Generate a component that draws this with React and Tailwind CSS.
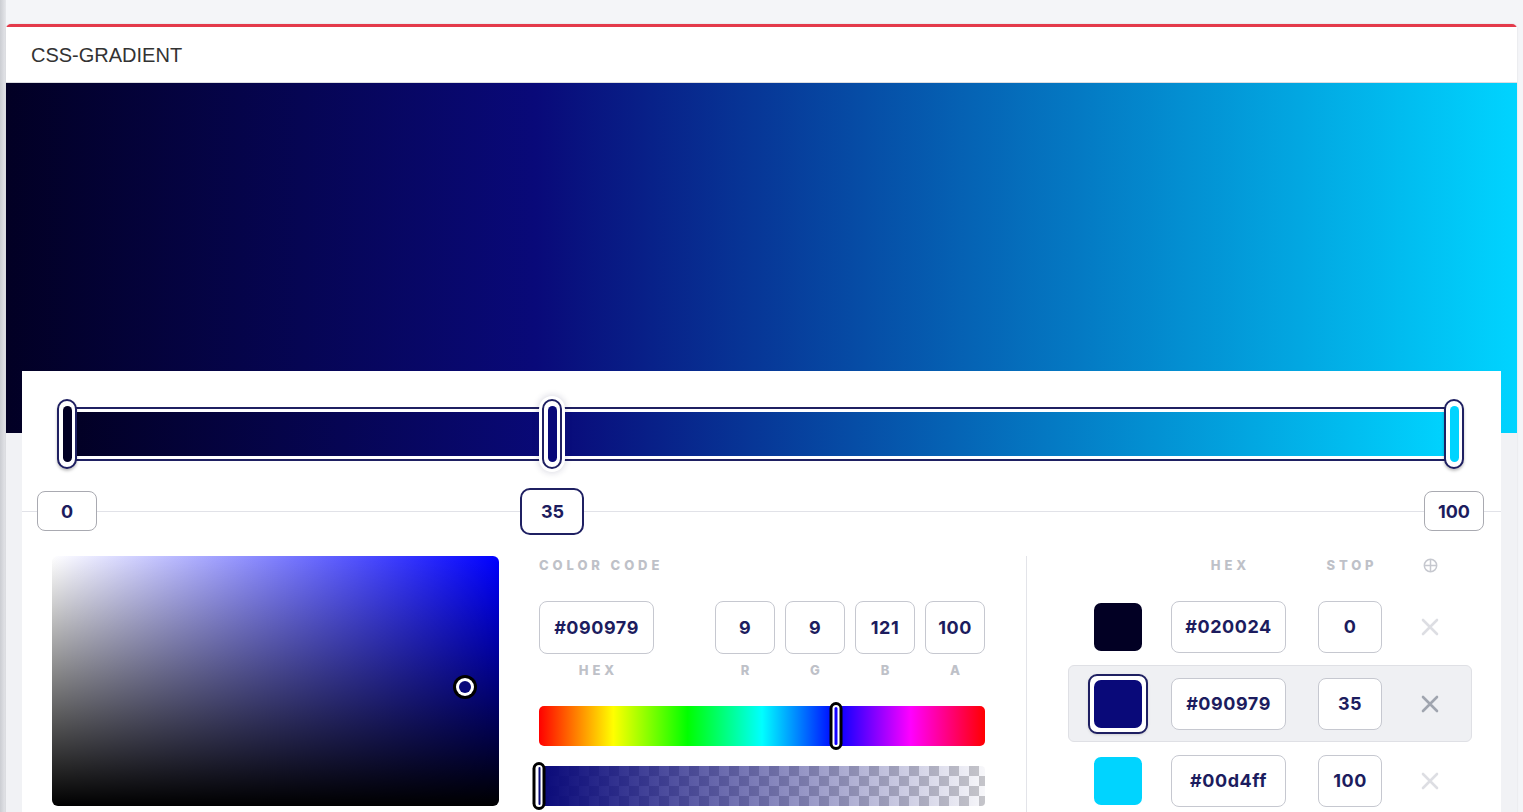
import React from "react";

const NAVY_TEXT = "text-[#1c1c5e]";

function Field({ w, h, children, className = "" }) {
  return (
    <div
      className={`flex items-center justify-center rounded-[8px] border border-[#c6c8d0] bg-white font-bold text-[18px] tracking-[0.03em] ${NAVY_TEXT} ${w} ${h} ${className}`}
    >
      {children}
    </div>
  );
}

function Label({ children, className = "" }) {
  return (
    <div className={`text-[13px] leading-4 font-extrabold tracking-[0.3em] text-[#bec1c8] ${className}`}>
      {children}
    </div>
  );
}

const stops = [
  { p: 0, color: "#020024", hex: "#020024" },
  { p: 35, color: "#090979", hex: "#090979", selected: true },
  { p: 100, color: "#00d4ff", hex: "#00d4ff" },
];

function XIcon({ className }) {
  return (
    <svg width="20" height="20" viewBox="0 0 20 20" className={className}>
      <path d="M3 3 L17 17 M17 3 L3 17" stroke="currentColor" strokeWidth="2.6" strokeLinecap="round" fill="none" />
    </svg>
  );
}

function CirclePlus() {
  return (
    <svg width="15" height="15" viewBox="0 0 16 16" className="text-[#c6c8cf]">
      <circle cx="8" cy="8" r="6.6" stroke="currentColor" strokeWidth="1.6" fill="none" />
      <path d="M8 1.4 V14.6 M1.4 8 H14.6" stroke="currentColor" strokeWidth="1.6" fill="none" />
    </svg>
  );
}

function StopRow({ s }) {
  const inner = (
    <>
      <div className="flex h-[60px] w-[60px] items-center justify-center">
        {s.selected ? (
          <div className="flex h-[60px] w-[60px] items-center justify-center rounded-[9px] border-2 border-[#1f2062] bg-white shadow-sm">
            <div className="h-[48px] w-[48px] rounded-[7px]" style={{ background: s.color }} />
          </div>
        ) : (
          <div className="h-[48px] w-[48px] rounded-[7px]" style={{ background: s.color }} />
        )}
      </div>
      <Field w="w-[115px]" h="h-[52px]" className="ml-[23px]">
        {s.hex}
      </Field>
      <Field w="w-[64px]" h="h-[52px]" className="ml-[32px]">
        {s.p}
      </Field>
      <div className="ml-[32px] flex w-[32px] justify-center">
        <XIcon className={s.selected ? "text-[#a0a5af]" : "text-[#dddee3]"} />
      </div>
    </>
  );
  if (s.selected) {
    return (
      <div className="flex h-[77px] items-center rounded-[6px] border border-[#dfe0e5] bg-[#eff0f3] pl-[19px]">
        {inner}
      </div>
    );
  }
  return <div className="flex h-[77px] items-center pl-[20px]">{inner}</div>;
}

export default function App() {
  return (
    <div className="flex h-[812px] w-full overflow-hidden bg-[#f4f5f8] font-['Inter',sans-serif]">
      <div className="h-full w-[6px] shrink-0 bg-linear-to-r from-[#cbcdd2] to-[#e6e7eb]" />
      <div className="flex-1 pt-[24px] pr-[6px]">
        <div className="rounded-t-[5px] border-t-[3px] border-[#e43a4b] bg-[#f1f2f5] shadow-[0_0_2px_rgba(0,0,0,0.12)]">
          {/* header */}
          <div className="flex h-[56px] items-center border-b border-[#dcdde1] bg-white pl-[25px] font-['Liberation_Sans',Arial,sans-serif] text-[20px] text-[#333]">
            CSS-GRADIENT
          </div>
          {/* preview */}
          <div className="h-[350px] [background-image:linear-gradient(90deg,#020024_0%,#090979_35%,#00d4ff_100%)]" />
          {/* panel */}
          <div className="relative mx-[16px] -mt-[62px] bg-white pt-[28px] pb-[20px]">
            {/* gradient slider */}
            <div className="relative ml-[45px] mr-[47px] h-[70px]">
              <div className="absolute inset-x-0 top-[8px] h-[54px] border-2 border-[#1f2062] bg-white py-[3px]">
                <div className="h-full [background-image:linear-gradient(90deg,#020024_0%,#090979_35%,#00d4ff_100%)]" />
              </div>
              {stops.map((s) => (
                <div
                  key={s.p}
                  className={`absolute top-0 flex h-[70px] w-[20px] -translate-x-1/2 items-center justify-center rounded-full border-2 border-[#1f2062] bg-white ${
                    s.selected
                      ? "shadow-[0_0_0_3px_#fff,0_0_6px_4px_rgba(30,30,80,0.16)]"
                      : "shadow-[0_2px_3px_rgba(0,0,0,0.25)]"
                  }`}
                  style={{ left: `${s.p}%` }}
                >
                  <div className="h-[56px] w-[9px] rounded-full" style={{ background: s.color }} />
                </div>
              ))}
            </div>
            {/* numbers */}
            <div className="relative mt-[19px] h-[47px]">
              <div className="absolute inset-x-0 top-[23px] h-px bg-[#e1e2e8]" />
              <div className="relative ml-[45px] mr-[47px] h-full">
                {stops.map((s) =>
                  s.selected ? (
                    <div
                      key={s.p}
                      className={`absolute top-0 flex h-[47px] w-[64px] -translate-x-1/2 items-center justify-center rounded-[10px] border-2 border-[#1f2062] bg-white text-[18px] font-bold ${NAVY_TEXT}`}
                      style={{ left: `${s.p}%` }}
                    >
                      {s.p}
                    </div>
                  ) : (
                    <div
                      key={s.p}
                      className={`absolute top-[3px] flex h-[40px] w-[60px] -translate-x-1/2 items-center justify-center rounded-[8px] border border-[#a9aab1] bg-white text-[18px] font-bold ${NAVY_TEXT}`}
                      style={{ left: `${s.p}%` }}
                    >
                      {s.p}
                    </div>
                  )
                )}
              </div>
            </div>
            {/* lower */}
            <div className="mt-[21px] flex pl-[30px]">
              {/* saturation picker */}
              <div className="relative h-[250px] w-[447px] rounded-[6px] [background-image:linear-gradient(to_top,#000,transparent),linear-gradient(to_right,#fff,#00f)]">
                <div className="absolute left-[413px] top-[131px] h-[24px] w-[24px] -translate-x-1/2 -translate-y-1/2 rounded-full bg-black p-[3px]">
                  <div className="h-full w-full rounded-full bg-white p-[3px]">
                    <div className="h-full w-full rounded-full bg-[#090979]" />
                  </div>
                </div>
              </div>
              {/* middle */}
              <div className="ml-[40px] w-[446px] pt-[1px]">
                <Label>COLOR CODE</Label>
                <div className="mt-[28px] flex">
                  <div className="flex flex-col items-center">
                    <Field w="w-[115px]" h="h-[53px]">#090979</Field>
                    <Label className="mt-[8px] pl-[0.3em]">HEX</Label>
                  </div>
                  <div className="ml-[61px] flex gap-[10px]">
                    {[
                      ["9", "R"],
                      ["9", "G"],
                      ["121", "B"],
                      ["100", "A"],
                    ].map(([v, l]) => (
                      <div key={l} className="flex flex-col items-center">
                        <Field w="w-[60px]" h="h-[53px]">{v}</Field>
                        <Label className="mt-[8px] pl-[0.3em]">{l}</Label>
                      </div>
                    ))}
                  </div>
                </div>
                {/* hue */}
                <div className="relative mt-[28px] h-[40px] rounded-[5px] [background-image:linear-gradient(90deg,#f00_0%,#ff0_16.66%,#0f0_33.33%,#0ff_50%,#00f_66.66%,#f0f_83.33%,#f00_100%)]">
                  <div className="absolute left-[66.6%] top-[-4px] h-[48px] w-[13px] -translate-x-1/2 rounded-full bg-black p-[3px]">
                    <div className="h-full w-full rounded-full bg-white p-[2px]">
                      <div className="h-full w-full rounded-full bg-[#1400ff]" />
                    </div>
                  </div>
                </div>
                {/* alpha */}
                <div className="relative mt-[20px] h-[40px] rounded-[4px] [background-image:conic-gradient(#c5c5ca_25%,#f7f7fa_0_50%,#c5c5ca_0_75%,#f7f7fa_0)] [background-size:20px_20px]">
                  <div className="h-full w-full rounded-[4px] bg-linear-to-r from-[#090979] to-transparent" />
                  <div className="absolute left-0 top-[-4px] h-[48px] w-[13px] -translate-x-1/2 rounded-full bg-black p-[3px]">
                    <div className="h-full w-full rounded-full bg-white p-[2px]">
                      <div className="mx-auto h-full w-[2px] rounded-full bg-[#090979]" />
                    </div>
                  </div>
                </div>
              </div>
              {/* divider */}
              <div className="ml-[41px] w-px self-stretch bg-[#e3e4e9]" />
              {/* right */}
              <div className="ml-[41px] w-[404px] pt-[1px]">
                <div className="flex h-4 items-center pl-[20px]">
                  <div className="w-[60px]" />
                  <div className="ml-[23px] flex w-[115px] justify-center">
                    <Label className="pl-[0.3em]">HEX</Label>
                  </div>
                  <div className="ml-[32px] flex w-[64px] justify-center">
                    <Label className="pl-[0.3em]">STOP</Label>
                  </div>
                  <div className="ml-[32px] flex w-[32px] justify-center">
                    <CirclePlus />
                  </div>
                </div>
                <div className="mt-[15px]">
                  {stops.map((s) => (
                    <StopRow key={s.p} s={s} />
                  ))}
                </div>
              </div>
            </div>
          </div>
        </div>
      </div>
    </div>
  );
}
